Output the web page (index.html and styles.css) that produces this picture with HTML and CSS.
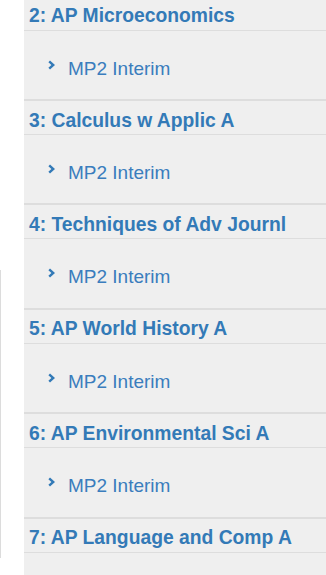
FILE: index.html
```html
<!DOCTYPE html>
<html>
<head>
<meta charset="utf-8">
<link rel="stylesheet" href="styles.css">
</head>
<body>
<div class="page">
  <div class="side"><div class="side-line"></div></div>
  <div class="panel">
    <div class="course">
      <div class="course-title">2: AP Microeconomics</div>
      <div class="course-item"><span class="chev"><svg width="7" height="10" viewBox="0 0 7 10"><path d="M1.2 1.3 L5.3 5 L1.2 8.7" fill="none" stroke="#337ab7" stroke-width="2.4"/></svg></span><span class="item-text">MP2 Interim</span></div>
    </div>
    <div class="course">
      <div class="course-title">3: Calculus w Applic A</div>
      <div class="course-item"><span class="chev"><svg width="7" height="10" viewBox="0 0 7 10"><path d="M1.2 1.3 L5.3 5 L1.2 8.7" fill="none" stroke="#337ab7" stroke-width="2.4"/></svg></span><span class="item-text">MP2 Interim</span></div>
    </div>
    <div class="course">
      <div class="course-title">4: Techniques of Adv Journl</div>
      <div class="course-item"><span class="chev"><svg width="7" height="10" viewBox="0 0 7 10"><path d="M1.2 1.3 L5.3 5 L1.2 8.7" fill="none" stroke="#337ab7" stroke-width="2.4"/></svg></span><span class="item-text">MP2 Interim</span></div>
    </div>
    <div class="course">
      <div class="course-title">5: AP World History A</div>
      <div class="course-item"><span class="chev"><svg width="7" height="10" viewBox="0 0 7 10"><path d="M1.2 1.3 L5.3 5 L1.2 8.7" fill="none" stroke="#337ab7" stroke-width="2.4"/></svg></span><span class="item-text">MP2 Interim</span></div>
    </div>
    <div class="course">
      <div class="course-title">6: AP Environmental Sci A</div>
      <div class="course-item"><span class="chev"><svg width="7" height="10" viewBox="0 0 7 10"><path d="M1.2 1.3 L5.3 5 L1.2 8.7" fill="none" stroke="#337ab7" stroke-width="2.4"/></svg></span><span class="item-text">MP2 Interim</span></div>
    </div>
    <div class="course">
      <div class="course-title">7: AP Language and Comp A</div>
    </div>
  </div>
</div>
</body>
</html>
```
FILE: styles.css
```css
html, body {
  margin: 0;
  padding: 0;
  background: #ffffff;
  overflow: hidden;
}
body {
  font-family: "Liberation Sans", Arial, sans-serif;
}
.page {
  display: flex;
  height: 575px;
  overflow: hidden;
}
.side {
  width: 24px;
  flex: none;
}
.side-line {
  margin-top: 270px;
  height: 288px;
  border-left: 1px solid #dcdcdc;
}
.panel {
  flex: 1;
  background: #efefef;
  margin-top: -3.4px;
}
.course {
  border-bottom: 2px solid #dddddd;
  height: 102.4px;
}
.course-title {
  height: 34px;
  box-sizing: border-box;
  border-bottom: 1px solid #dddddd;
  padding-left: 5px;
  display: flex;
  align-items: center;
  padding-top: 6px;
  font-size: 19.3px;
  font-weight: bold;
  color: #337ab7;
  white-space: nowrap;
}
.course-item {
  display: flex;
  align-items: center;
  height: 67px;
  box-sizing: border-box;
  padding-top: 9px;
  padding-left: 24px;
  color: #3a7dbd;
  font-size: 19px;
}
.chev {
  display: flex;
  width: 20px;
  margin-top: -8px;
}
```
